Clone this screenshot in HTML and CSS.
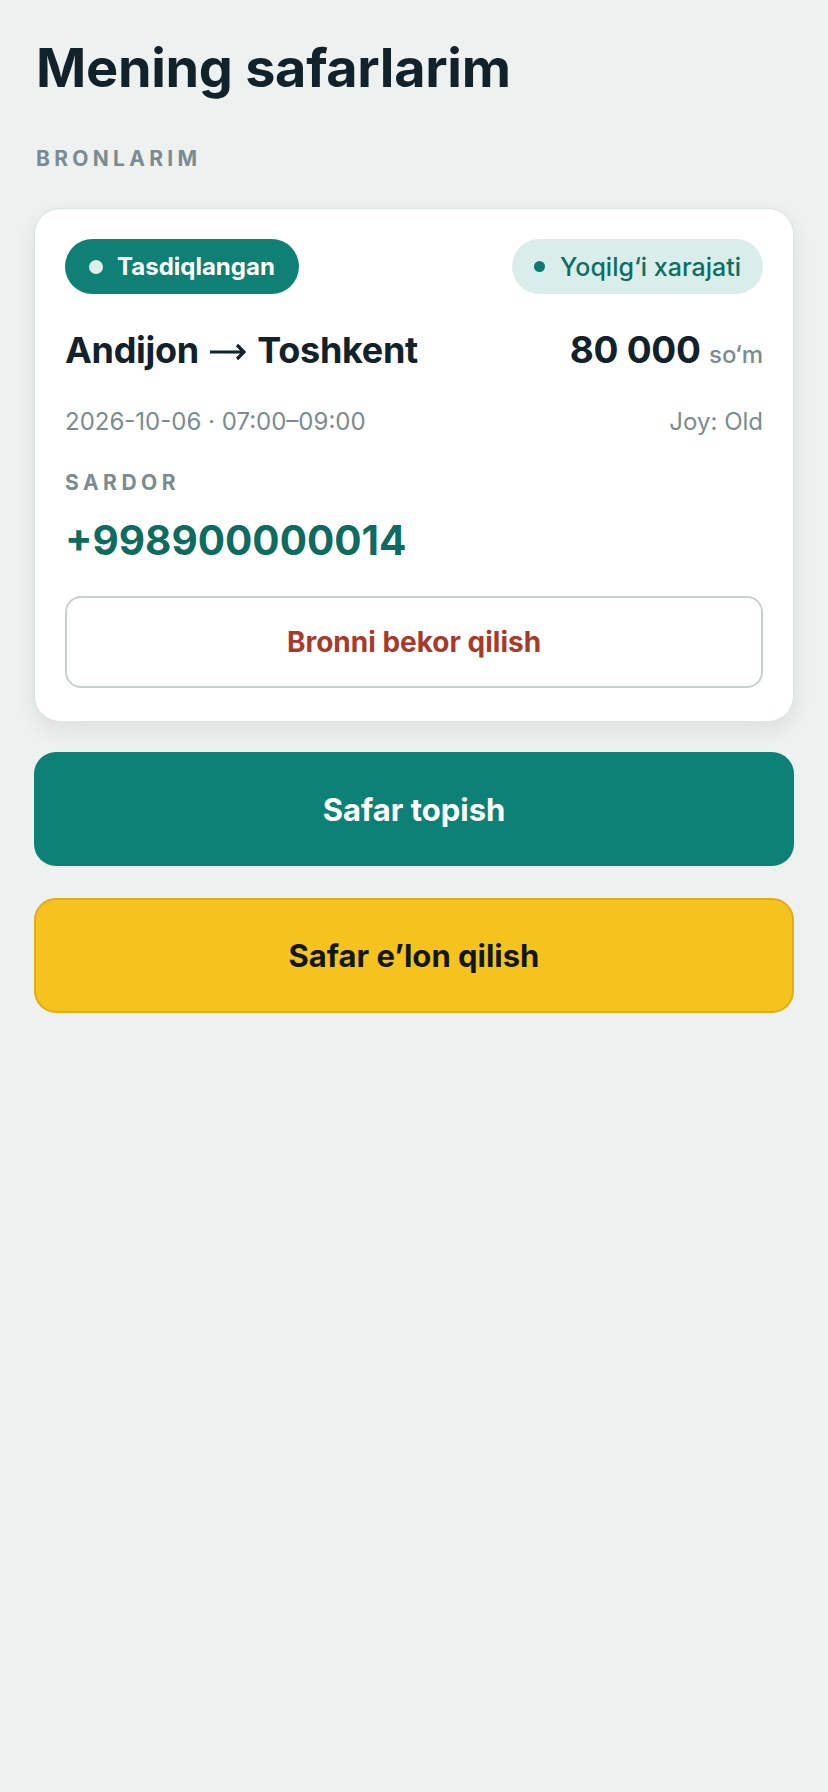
FILE: index.html
```html
<!DOCTYPE html>
<html lang="uz">
<head>
    <meta charset="UTF-8">
    <meta name="viewport" content="width=device-width, initial-scale=1.0">
    <title>Mening safarlarim</title>
    <link rel="stylesheet" href="styles.css">
</head>
<body>
    <div class="page">
        <h1 class="title">Mening safarlarim</h1>
        <div class="section-label">Bronlarim</div>

        <div class="card">
            <div class="card-top">
                <span class="badge badge-status"><span class="dot"></span>Tasdiqlangan</span>
                <span class="badge badge-type"><span class="dot"></span>Yoqilg‘i xarajati</span>
            </div>

            <div class="route-row">
                <div class="route">
                    Andijon
                    <svg class="arrow" width="38" height="20" viewBox="0 0 38 20" aria-hidden="true">
                        <path d="M1 10 H35 M28 3 L35 10 L28 17" fill="none" stroke="#11222a" stroke-width="3.2" stroke-linecap="butt" stroke-linejoin="miter"/>
                    </svg>
                    Toshkent
                </div>
                <div class="price">80 000 <span class="currency">so‘m</span></div>
            </div>

            <div class="meta-row">
                <span>2026-10-06 · 07:00–09:00</span>
                <span>Joy: Old</span>
            </div>

            <div class="driver-name">Sardor</div>
            <div class="driver-phone">+998900000014</div>

            <button class="btn-cancel">Bronni bekor qilish</button>
        </div>

        <button class="btn btn-primary">Safar topish</button>
        <button class="btn btn-secondary">Safar e’lon qilish</button>
    </div>
</body>
</html>
```

FILE: styles.css
```css
body {
    margin: 0;
    background: #edf1f0;
    font-family: Inter, "Noto Sans", sans-serif;
    color: #11222a;
}

.page {
    padding: 36px 34px 40px;
    display: flex;
    flex-direction: column;
}

.title {
    font-size: 54px;
    line-height: 64px;
    font-weight: 700;
    letter-spacing: -0.3px;
    margin: 0 0 0 2px;
}

.section-label {
    margin: 47px 0 37px 2px;
    font-size: 21px;
    line-height: 24px;
    font-weight: 700;
    letter-spacing: 4.3px;
    text-transform: uppercase;
    color: #7a8c91;
}

.card {
    background: white;
    border: 1px solid #dde3e2;
    border-radius: 26px;
    padding: 30px 30px 33px;
    box-shadow: 0 8px 20px rgba(30, 50, 50, 0.08);
}

.card-top {
    display: flex;
    justify-content: space-between;
    align-items: center;
}

.badge {
    display: inline-flex;
    align-items: center;
    height: 55px;
    border-radius: 28px;
    box-sizing: border-box;
}

.badge .dot {
    border-radius: 50%;
    display: inline-block;
}

.badge-status {
    background: #0e8074;
    color: white;
    font-size: 24px;
    font-weight: 700;
    padding: 0 24px;
}

.badge-status .dot {
    width: 14px;
    height: 14px;
    background: #dcefeb;
    margin-right: 14px;
}

.badge-type {
    background: #d9eeea;
    color: #0f6e63;
    font-size: 25px;
    font-weight: 500;
    padding: 0 22px;
}

.badge-type .dot {
    width: 11px;
    height: 11px;
    background: #0e7a6e;
    margin-right: 15px;
}

.route-row {
    display: flex;
    justify-content: space-between;
    align-items: baseline;
    margin-top: 34px;
    line-height: 44px;
}

.route {
    font-size: 36px;
    font-weight: 700;
    letter-spacing: -0.3px;
}

.arrow {
    margin: 0 2px;
    vertical-align: 1px;
}

.price {
    font-size: 37px;
    font-weight: 700;
    letter-spacing: -0.3px;
}

.currency {
    font-size: 24px;
    font-weight: 500;
    color: #7a8c91;
    letter-spacing: 0;
}

.meta-row {
    display: flex;
    justify-content: space-between;
    margin-top: 30px;
    font-size: 24px;
    line-height: 30px;
    color: #7a8c91;
}

.driver-name {
    margin-top: 33px;
    font-size: 21px;
    line-height: 26px;
    font-weight: 700;
    letter-spacing: 4.5px;
    text-transform: uppercase;
    color: #7a8c91;
}

.driver-phone {
    margin-top: 20px;
    font-size: 40.5px;
    line-height: 50px;
    font-weight: 700;
    color: #0d6b5f;
}

.btn-cancel {
    display: block;
    width: 100%;
    height: 92px;
    margin-top: 30px;
    background: white;
    border: 2px solid #c9d1d0;
    border-radius: 16px;
    color: #a83a2c;
    font-family: inherit;
    font-size: 28px;
    font-weight: 700;
    cursor: pointer;
}

.btn {
    width: 100%;
    height: 114px;
    border-radius: 22px;
    font-family: inherit;
    font-size: 31px;
    font-weight: 700;
    cursor: pointer;
    border: none;
}

.btn-primary {
    margin-top: 30px;
    background: #0e8176;
    color: white;
}

.btn-secondary {
    margin-top: 32px;
    height: 115px;
    background: #f6c31e;
    border: 2px solid #e2ac16;
    color: #11181c;
}
```
